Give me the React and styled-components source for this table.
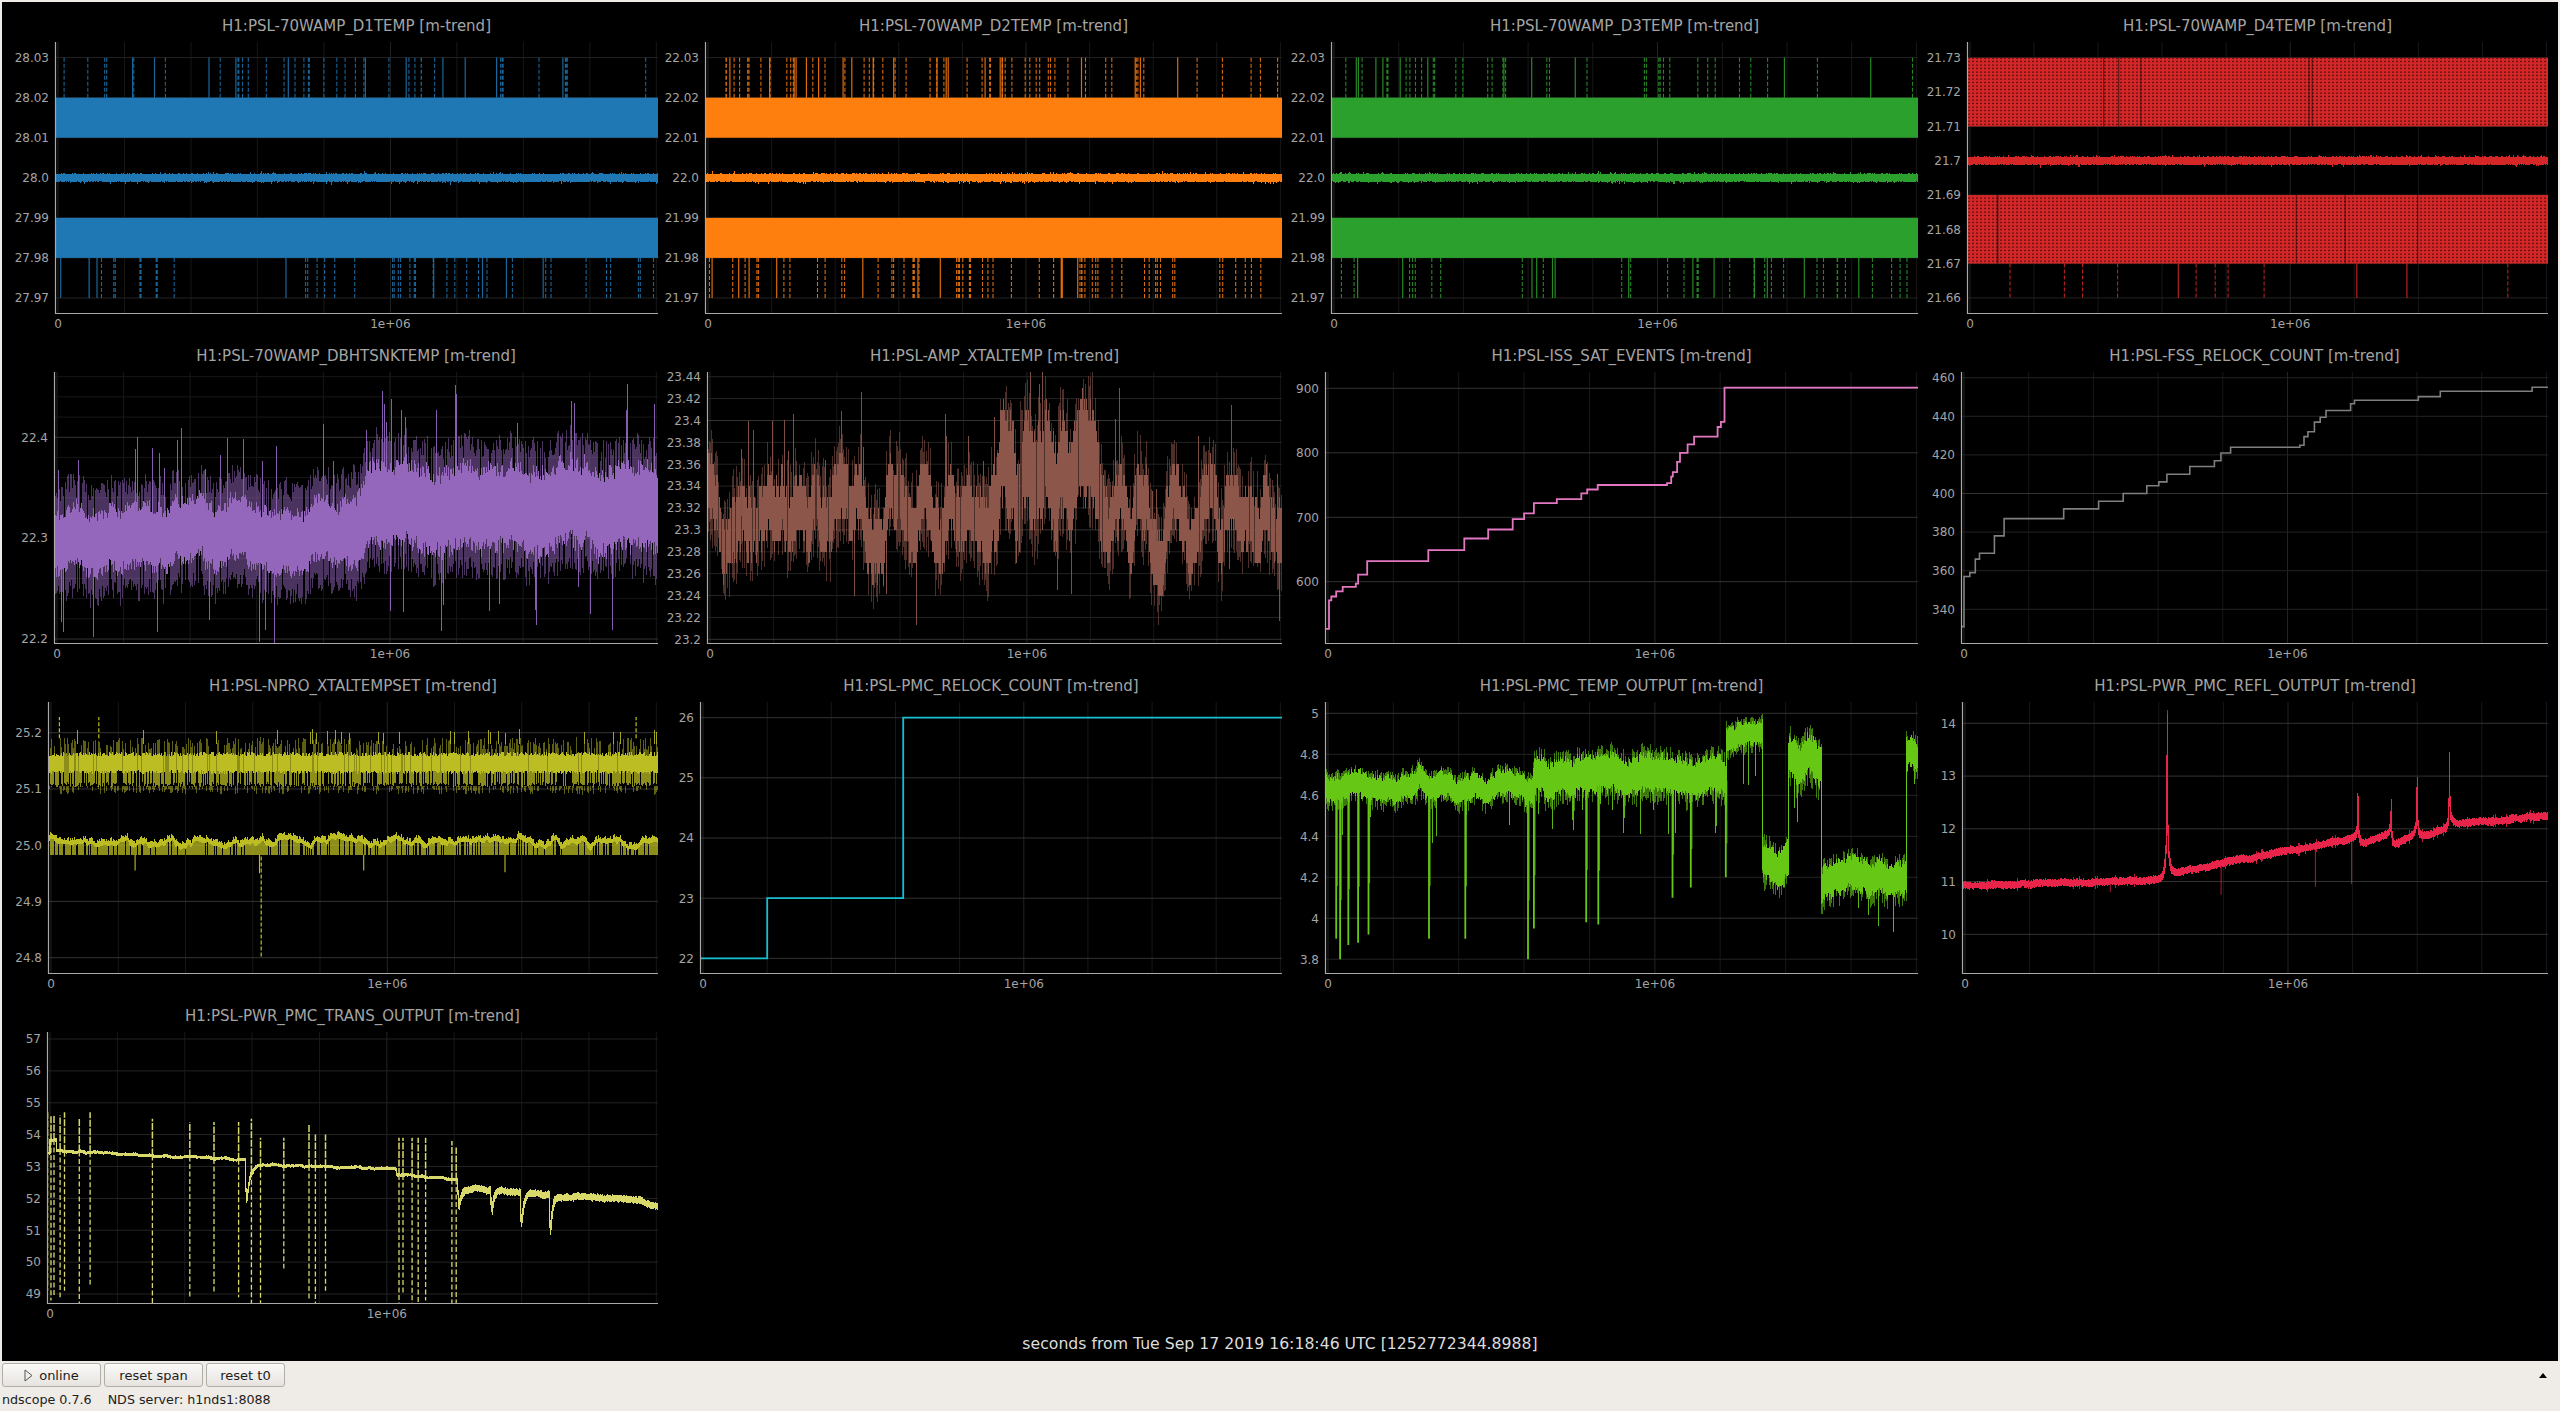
import React from 'react';
import styled, { createGlobalStyle } from 'styled-components';

const GlobalStyle = createGlobalStyle`
  html, body {
    margin: 0;
    padding: 0;
  }
  body {
    background: #efece7;
    font-family: "DejaVu Sans", "Liberation Sans", sans-serif;
    overflow: hidden;
  }
`;

const Window = styled.div`
  width: 2560px;
  height: 1411px;
  box-sizing: border-box;
  padding: 2px 2px 0 2px;
  display: flex;
  flex-direction: column;
  background: #efece7;
`;

const Scope = styled.div`
  flex: none;
  height: 1359px;
  background: #000;
  display: flex;
  flex-direction: column;
`;

const PlotGrid = styled.div`
  display: grid;
  grid-template-columns: 648px 619px 631px 625px;
  grid-template-rows: repeat(4, 330px);
  column-gap: 5px;
  padding-left: 8px;
`;

const Cell = styled.div`
  display: flex;
  flex-direction: column;
  min-width: 0;
`;

const PlotTitle = styled.div`
  height: 40px;
  box-sizing: border-box;
  padding: 14px 0 0 ${(p) => p.$inset}px;
  line-height: 20px;
  font-size: 15px;
  color: #a4a4a4;
  text-align: center;
  white-space: nowrap;
`;

const Chart = styled.svg`
  display: block;
  overflow: visible;
  font-family: "DejaVu Sans", sans-serif;
  font-size: 12px;
`;

const TimeLabel = styled.div`
  height: 39px;
  box-sizing: border-box;
  padding-top: 13px;
  line-height: 18px;
  font-size: 15.7px;
  color: #dcdcdc;
  text-align: center;
  white-space: nowrap;
`;

const Controls = styled.div`
  flex: 1;
  display: flex;
  flex-direction: column;
`;

const Toolbar = styled.div`
  display: flex;
  align-items: center;
  gap: 3px;
  height: 24px;
  margin-top: 2px;
`;

const Button = styled.button`
  width: ${(p) => p.$w}px;
  height: 24px;
  padding: 0;
  display: inline-flex;
  align-items: center;
  justify-content: center;
  gap: 6px;
  font-family: "DejaVu Sans", sans-serif;
  font-size: 13px;
  color: #1c1c1c;
  background: linear-gradient(#fbfaf9, #e6e3df);
  border: 1px solid #b1ada7;
  border-radius: 3px;
`;

const Spacer = styled.div`
  flex: 1;
`;

const CollapseArrow = styled.div`
  width: 0;
  height: 0;
  margin-right: 11px;
  border-left: 4px solid transparent;
  border-right: 4px solid transparent;
  border-bottom: 5px solid #000;
`;

const StatusBar = styled.div`
  display: flex;
  align-items: center;
  gap: 16px;
  height: 24px;
  font-size: 12.7px;
  color: #202020;
  white-space: nowrap;
`;

// ---- plotting helpers ----

const H = 272;
const SVG_H = 290;
const XSPAN = 1.805;
const COL_W = [648, 619, 631, 625];
const GRID = ['#333333', '#232323', '#171717'];

function mulberry32(seed) {
  let a = seed;
  return function () {
    a |= 0;
    a = (a + 0x6d2b79f5) | 0;
    let t = Math.imul(a ^ (a >>> 15), 1 | a);
    t = (t + Math.imul(t ^ (t >>> 7), 61 | t)) ^ t;
    return ((t ^ (t >>> 14)) >>> 0) / 4294967296;
  };
}

function makeNoise(seed, knots) {
  const r = mulberry32(seed);
  const vals = Array.from({ length: knots + 2 }, () => r() * 2 - 1);
  return (u) => {
    const t = ((u + 0.05) / 1.9) * knots;
    const i = Math.max(0, Math.min(knots, Math.floor(t)));
    const f = Math.max(0, Math.min(1, t - i));
    const s = (1 - Math.cos(f * Math.PI)) / 2;
    return vals[i] * (1 - s) + vals[i + 1] * s;
  };
}

const f1 = (v) => v.toFixed(1);

const vseg = (x, a, b) => {
  let lo = Math.min(a, b);
  let hi = Math.max(a, b);
  if (hi - lo < 1) {
    const m = (lo + hi) / 2;
    lo = m - 0.5;
    hi = m + 0.5;
  }
  return `M${f1(x)} ${f1(lo)}V${f1(hi)}`;
};

const columns = (ctx) => {
  const out = [];
  for (let px = ctx.ax + 1; px < ctx.w; px++) out.push([px + 0.5, ctx.ux(px + 0.5)]);
  return out;
};

const stepPath = (ctx, steps, uEnd = 1.9) => {
  const { sx, sy } = ctx;
  let d = `M${f1(sx(steps[0][0]))} ${f1(sy(steps[0][1]))}`;
  for (let i = 1; i < steps.length; i++) {
    d += `H${f1(sx(steps[i][0]))}V${f1(sy(steps[i][1]))}`;
  }
  return d + `H${f1(sx(uEnd))}`;
};

// min / max of a value function over the width of one pixel column
const spanOf = (fn, u, du = 0.0008) => {
  let lo = Infinity;
  let hi = -Infinity;
  for (let k = -2; k <= 2; k++) {
    const v = fn(u + k * du);
    lo = Math.min(lo, v);
    hi = Math.max(hi, v);
  }
  return [lo, hi];
};

// spec returns a list of [layer, lo, hi] for each column
const envelope = (layers, spec) => (ctx) => {
  const paths = layers.map(() => '');
  for (const [px, u] of columns(ctx)) {
    for (const [i, lo, hi] of spec(u, ctx.rng)) {
      paths[i] += vseg(px, ctx.sy(lo), ctx.sy(hi));
    }
  }
  return paths.map((d, i) => (
    <path key={`env${i}`} d={d} stroke={ctx.color} strokeWidth={1} opacity={layers[i]} fill="none" shapeRendering="crispEdges" />
  ));
};

const spikeLines = (ctx, list, key, { width = 1.3, dash, opacity = 1 } = {}) => {
  let d = '';
  for (const [u, a, b] of list) d += `M${f1(ctx.sx(u))} ${f1(ctx.sy(a))}V${f1(ctx.sy(b))}`;
  return <path key={key} d={d} stroke={ctx.color} strokeWidth={width} strokeDasharray={dash} opacity={opacity} fill="none" />;
};

const bandDraw = ({ c, top, bot, up, down, pattern, streaks }) => (ctx) => {
  const { sy, ax, w, rng, color } = ctx;
  const x1 = ax + 1;
  const fill = pattern ? `url(#pat-${ctx.id})` : color;
  const els = [];
  const rect = (k, [lo, hi]) => (
    <rect key={k} x={x1} y={sy(hi)} width={w - x1} height={sy(lo) - sy(hi)} fill={fill} />
  );
  els.push(rect('bt', top), rect('bb', bot));
  const dashes = (k, [from, to, n]) => {
    let solid = '';
    let dashed = '';
    for (let i = 0; i < n; i++) {
      const x = f1(x1 + 3 + rng() * (w - x1 - 6));
      const seg = `M${x} ${f1(sy(from))}V${f1(sy(to))}`;
      if (rng() < 0.22) solid += seg;
      else dashed += seg;
    }
    return [
      <path key={`${k}s`} d={solid} stroke={color} strokeWidth={1.2} opacity={0.85} fill="none" />,
      <path key={`${k}d`} d={dashed} stroke={color} strokeWidth={1.1} strokeDasharray="4 2" opacity={0.85} fill="none" />,
    ];
  };
  if (up) els.push(...dashes('up', up));
  if (down) els.push(...dashes('dn', down));
  if (streaks) {
    let d = '';
    for (let i = 0; i < streaks; i++) {
      const x = f1(x1 + rng() * (w - x1));
      const band = rng() < 0.5 ? top : bot;
      d += `M${x} ${f1(sy(band[1]))}V${f1(sy(band[0]))}`;
    }
    els.push(<path key="streaks" d={d} stroke="#000" strokeWidth={1.2} opacity={0.5} fill="none" />);
  }
  let mean = '';
  const my = sy(c);
  for (let px = x1; px < w; px++) {
    const a = 3.4 + rng() * 1.3 + (rng() < 0.06 ? rng() * 2.4 : 0);
    const b = 3.4 + rng() * 1.3 + (rng() < 0.06 ? rng() * 2.4 : 0);
    mean += `M${px + 0.5} ${f1(my - a)}V${f1(my + b)}`;
  }
  els.push(<path key="mean" d={mean} stroke={color} strokeWidth={1} fill="none" shapeRendering="crispEdges" />);
  return els;
};

// ---- per-channel data ----

const pn1 = makeNoise(51, 36);
const pn2 = makeNoise(52, 180);
const purpleSpec = (u, r) => {
  const ramp = Math.max(0, Math.min(1, (u - 0.84) / 0.12));
  const m = 22.303 + 0.027 * ramp + 0.009 * pn1(u) + 0.005 * pn2(u);
  const ch = 0.03 + 0.01 * ramp;
  const out = [[2, m - ch * (0.75 + 0.4 * r()), m + ch * (0.75 + 0.4 * r())]];
  if (r() < 0.8) out.push([1, m - ch - 0.012 - 0.02 * r(), m + ch + 0.012 + 0.02 * r()]);
  if (r() < 0.09) {
    const top = r() < 0.55;
    const ext = ch + 0.035 + 0.045 * r();
    out.push(top ? [0, m, m + ext] : [0, m - ext, m]);
  }
  return out;
};

const bn1 = makeNoise(61, 80);
const bn2 = makeNoise(62, 260);
const brownHigh = (u) => {
  const a = Math.max(0, Math.min(1, (u - 0.85) / 0.08));
  const b = Math.max(0, Math.min(1, (1.26 - u) / 0.05));
  return Math.min(a, b);
};
const brownCenter = (u) => {
  let base = 23.31 + 0.04 * brownHigh(u);
  base -= 0.028 * Math.exp(-(((u - 1.42) / 0.03) ** 2));
  return base + 0.03 * bn1(u) + 0.01 * bn2(u);
};
const brownSpec = (u, r) => {
  const c = brownCenter(u);
  const h = 0.026 + 0.018 * brownHigh(u);
  const q = (v) => Math.round(v / 0.01) * 0.01;
  const out = [];
  if (r() < 0.92) out.push([2, q(c - h * (0.7 + 0.45 * r())), q(c + h * (0.7 + 0.45 * r()))]);
  else out.push([1, c - h, c + h]);
  if (r() < 0.55) out.push([1, c - h - 0.008 - 0.02 * r(), c + h + 0.008 + 0.022 * r()]);
  if (r() < 0.07) {
    const ext = h + 0.03 + 0.05 * r();
    out.push(r() < 0.6 ? [0, c, c + ext] : [0, c - ext, c]);
  }
  return out;
};

const on1 = makeNoise(91, 70);
const on2 = makeNoise(92, 240);
const oliveSpec = (u, r) => {
  const out = [];
  const cTop = 25.162 + 0.008 * (r() - 0.5);
  const cBot = 25.13 + 0.006 * (r() - 0.5);
  if (r() < 0.88) out.push([3, cBot, cTop]);
  else out.push([2, cBot, cTop]);
  if (r() < 0.65) out.push([2, 25.104 + 0.008 * r(), cBot]);
  if (r() < 0.5) out.push([1, cTop, 25.17 + 0.022 * r()]);
  if (r() < 0.45) out.push([1, 25.09 + 0.014 * r(), 25.106]);
  if (r() < 0.04) out.push([0, 25.18, 25.2 + 0.006 * r()]);
  const m = 25.004 + 0.008 * on1(u) + 0.004 * on2(u);
  out.push([3, m - 0.003, m + 0.004 + 0.007 * r()]);
  if (r() < 0.75) out.push([2, 24.983, m]);
  return out;
};

const gn1 = makeNoise(111, 60);
const gn2 = makeNoise(112, 220);
const GREEN_REGIONS = [
  [-0.1, 0.63, 4.64, 0.075],
  [0.63, 1.22, 4.7, 0.11],
  [1.22, 1.33, 4.89, 0.07],
  [1.33, 1.41, 4.26, 0.11],
  [1.41, 1.51, 4.77, 0.12],
  [1.51, 1.77, 4.19, 0.1],
  [1.77, 2.0, 4.8, 0.09],
];
const greenRegion = (u) => GREEN_REGIONS.find((g) => u < g[1]) || GREEN_REGIONS[6];
const greenCenter = (u) => {
  const g = greenRegion(u);
  return g[2] + 0.03 * gn1(u) + 0.015 * gn2(u) + 0.06 * Math.exp(-(((u - 0.285) / 0.012) ** 2));
};
const greenSpec = (u, r) => {
  const h = greenRegion(u)[3];
  const [lo, hi] = spanOf(greenCenter, u, 0.0007);
  const out = [[2, lo - h * (0.55 + 0.35 * r()), hi + h * (0.55 + 0.35 * r())]];
  if (r() < 0.6) out.push([1, lo - h * (0.9 + 0.5 * r()), hi + h * (0.9 + 0.3 * r())]);
  if (r() < 0.06) out.push([0, lo - h - 0.05 - 0.15 * r(), lo]);
  return out;
};
const GREEN_SPIKES = [
  [0.025, 3.9], [0.037, 3.8], [0.062, 3.87], [0.092, 3.88], [0.124, 3.92], [0.309, 3.9],
  [0.42, 3.9], [0.612, 3.8], [0.63, 3.95], [0.79, 3.98], [0.827, 3.97], [1.054, 4.1],
  [1.11, 4.15], [1.217, 4.2], [1.395, 4.15], [1.76, 4.1],
];

const rn1 = makeNoise(121, 90);
const RED_SPIKES = [
  [0.626, 2.4, 0.9],
  [1.217, 0.7, 0.2],
  [1.32, 0.55, 0.2],
  [1.4, 0.95, 0.25],
  [1.5, 1.05, 0.3],
];
const reflValue = (u) => {
  let v;
  if (u < 0.626) v = 10.93 + (0.1 * Math.max(0, u)) / 0.626;
  else if (u < 1.217) v = 11.15 + ((u - 0.626) / 0.591) * 0.68;
  else if (u < 1.32) v = 11.7 + ((u - 1.217) / 0.103) * 0.2;
  else if (u < 1.4) v = 11.65 + ((u - 1.32) / 0.08) * 0.25;
  else if (u < 1.5) v = 11.85 + ((u - 1.4) / 0.1) * 0.15;
  else v = 12.08 + ((u - 1.5) / 0.3) * 0.17;
  for (const [u0, a, b] of RED_SPIKES) {
    v += a * Math.exp(-Math.abs(u - u0) / 0.0011);
    v += b * Math.exp(-Math.abs(u - u0) / 0.006);
  }
  return v + 0.02 * rn1(u);
};
const reflSpec = (u, r) => {
  const [lo, hi] = spanOf(reflValue, u);
  const out = [[1, lo - 0.05 - 0.035 * r(), hi + 0.05 + 0.035 * r()]];
  if (r() < 0.05) out.push([0, lo - 0.12, hi + 0.12]);
  return out;
};

const tn1 = makeNoise(131, 120);
const TRANS_DIPS = [
  [0.585, 1.3, 0.01],
  [1.214, 0.6, 0.01],
  [1.313, 0.7, 0.006],
  [1.4, 1.0, 0.007],
  [1.486, 1.2, 0.007],
];
const transValue = (u) => {
  let v;
  if (u < 0) v = 53.45;
  else if (u < 0.02) v = 53.85;
  else if (u < 0.6) v = 53.5 - ((u - 0.02) / 0.58) * 0.3;
  else if (u < 1.03) v = 53.07 - ((u - 0.6) / 0.43) * 0.15;
  else if (u < 1.212) v = 52.75 - ((u - 1.03) / 0.182) * 0.15;
  else if (u < 1.5) v = 52.35 - ((u - 1.212) / 0.288) * 0.25;
  else if (u < 1.74) v = 52.07 - ((u - 1.5) / 0.24) * 0.1;
  else v = 51.97 - ((u - 1.74) / 0.07) * 0.25;
  for (const [u0, d, w] of TRANS_DIPS) {
    if (u > u0 - 0.004) v -= d * Math.exp(-Math.abs(u - u0) / w);
  }
  return v + 0.03 * tn1(u);
};
const transSpec = (u, r) => {
  const [lo, hi] = spanOf(transValue, u);
  const h = u > 1.212 ? 0.1 : 0.045;
  return [[1, lo - h * (0.8 + 0.5 * r()), hi + h * (0.8 + 0.5 * r())]];
};
const TRANS_SPIKES = [
  [-0.007, 54.7, 49.1], [0.003, 54.6, 48.8], [0.012, 54.6, 48.9], [0.03, 54.6, 48.9],
  [0.043, 54.7, 49.1], [0.087, 54.5, 48.7], [0.119, 54.7, 49.3], [0.304, 54.5, 48.7],
  [0.415, 54.4, 48.9], [0.487, 54.4, 49.0], [0.56, 54.4, 48.9], [0.598, 54.5, 48.7],
  [0.625, 53.9, 48.7], [0.694, 53.9, 49.8], [0.769, 54.3, 48.8], [0.788, 54.0, 48.7],
  [0.818, 54.0, 49.1], [1.036, 53.9, 48.7], [1.048, 53.9, 49.0], [1.075, 53.9, 48.7],
  [1.093, 53.9, 48.7], [1.115, 53.9, 48.8], [1.193, 53.8, 48.7], [1.206, 53.6, 48.7],
];

const ISS_STEPS = [
  [-0.02, 527], [0.003, 571], [0.01, 577], [0.025, 585], [0.045, 592], [0.085, 597],
  [0.092, 611], [0.12, 632], [0.307, 649], [0.417, 667], [0.49, 681], [0.565, 697],
  [0.6, 706], [0.63, 722], [0.7, 728], [0.775, 737], [0.793, 743], [0.825, 750],
  [1.037, 753], [1.05, 763], [1.055, 770], [1.068, 786], [1.077, 800], [1.1, 813],
  [1.12, 825], [1.192, 840], [1.202, 848], [1.213, 901],
];

const FSS_STEPS = [
  [-0.02, 331], [0.0, 357], [0.018, 359], [0.035, 366], [0.048, 369], [0.094, 378],
  [0.124, 387], [0.308, 392], [0.416, 396], [0.492, 400], [0.565, 404], [0.602, 406],
  [0.627, 410], [0.698, 414], [0.774, 417], [0.794, 421], [0.824, 424], [1.038, 425],
  [1.051, 429.5], [1.063, 432], [1.083, 437], [1.101, 439.5], [1.119, 443], [1.195, 446.5],
  [1.207, 448.3], [1.404, 450.2], [1.472, 453], [1.756, 455],
];

const PMC_STEPS = [[-0.02, 22], [0.2, 23], [0.624, 26]];

const fmt2 = (v) => v.toFixed(2).replace(/0$/, '');
const fmt1 = (v) => v.toFixed(1);
const fmt1s = (v) => v.toFixed(1).replace(/\.0$/, '');
const fmtInt = (v) => String(Math.round(v));

const seq = (a, b, step) => {
  const out = [];
  const n = Math.round((b - a) / step);
  for (let i = 0; i <= n; i++) out.push(+(a + i * step).toFixed(6));
  return out;
};

const mk = (values, fmt, lvl, majors = []) =>
  values.map((v) => ({ v, label: fmt(v), lvl: majors.some((m) => Math.abs(m - v) < 1e-6) ? 0 : lvl }));

const stepDraw = (steps, width) => (ctx) => [
  <path key="step" d={stepPath(ctx, steps)} stroke={ctx.color} strokeWidth={width} fill="none" />,
];

const PLOTS = [
  {
    id: 1, col: 0, ax: 45, seed: 11, color: '#1f77b4',
    title: 'H1:PSL-70WAMP_D1TEMP [m-trend]',
    yr: [27.966, 28.0339],
    ticks: mk(seq(27.97, 28.03, 0.01), fmt2, 1),
    draw: bandDraw({ c: 28.0, top: [28.01, 28.02], bot: [27.98, 27.99], up: [28.02, 28.03, 48], down: [27.98, 27.97, 46] }),
  },
  {
    id: 2, col: 1, ax: 42, seed: 12, color: '#ff7f0e',
    title: 'H1:PSL-70WAMP_D2TEMP [m-trend]',
    yr: [21.966, 22.0339],
    ticks: mk(seq(21.97, 22.03, 0.01), fmt2, 1),
    draw: bandDraw({ c: 22.0, top: [22.01, 22.02], bot: [21.98, 21.99], up: [22.02, 22.03, 70], down: [21.98, 21.97, 64] }),
  },
  {
    id: 3, col: 2, ax: 44, seed: 13, color: '#2ca02c',
    title: 'H1:PSL-70WAMP_D3TEMP [m-trend]',
    yr: [21.966, 22.0339],
    ticks: mk(seq(21.97, 22.03, 0.01), fmt2, 1),
    draw: bandDraw({ c: 22.0, top: [22.01, 22.02], bot: [21.98, 21.99], up: [22.02, 22.03, 44], down: [21.98, 21.97, 42] }),
  },
  {
    id: 4, col: 3, ax: 44, seed: 14, color: '#d62728',
    title: 'H1:PSL-70WAMP_D4TEMP [m-trend]',
    yr: [21.6553, 21.7346],
    ticks: mk(seq(21.66, 21.73, 0.01), fmt2, 1),
    pattern: true,
    draw: bandDraw({ c: 21.7, top: [21.71, 21.73], bot: [21.67, 21.69], down: [21.67, 21.66, 12], pattern: true, streaks: 10 }),
  },
  {
    id: 5, col: 0, ax: 44, seed: 15, color: '#9467bd',
    title: 'H1:PSL-70WAMP_DBHTSNKTEMP [m-trend]',
    yr: [22.195, 22.4647],
    ticks: mk([22.2, 22.3, 22.4], fmt1, 0),
    minor: seq(22.2, 22.46, 0.02),
    draw: envelope([0.9, 0.5, 1], purpleSpec),
  },
  {
    id: 6, col: 1, ax: 44, seed: 16, color: '#8c564b',
    title: 'H1:PSL-AMP_XTALTEMP [m-trend]',
    yr: [23.1957, 23.4443],
    ticks: mk(seq(23.2, 23.44, 0.02), fmt2, 1, [23.2, 23.3, 23.4]),
    draw: envelope([0.9, 0.55, 1], brownSpec),
  },
  {
    id: 7, col: 2, ax: 38, seed: 17, color: '#e377c2',
    title: 'H1:PSL-ISS_SAT_EVENTS [m-trend]',
    yr: [503.4, 925.3],
    ticks: mk([600, 700, 800, 900], fmtInt, 0),
    draw: stepDraw(ISS_STEPS, 1.8),
  },
  {
    id: 8, col: 3, ax: 38, seed: 18, color: '#7f7f7f',
    title: 'H1:PSL-FSS_RELOCK_COUNT [m-trend]',
    yr: [322, 462.95],
    ticks: mk(seq(340, 460, 20), fmtInt, 1, [400]),
    draw: stepDraw(FSS_STEPS, 1.6),
  },
  {
    id: 9, col: 0, ax: 38, seed: 19, color: '#bcbd22',
    title: 'H1:PSL-NPRO_XTALTEMPSET [m-trend]',
    yr: [24.771, 25.2546],
    ticks: mk([24.8, 24.9, 25.0, 25.1, 25.2], fmt1, 0),
    draw: (ctx) => [
      ...envelope([0.85, 0.5, 0.75, 1], oliveSpec)(ctx),
      spikeLines(ctx, [[0.025, 25.19, 25.228], [0.142, 25.19, 25.228], [1.74, 25.19, 25.228]], 'su', { width: 1.2, dash: '4 2' }),
      spikeLines(ctx, [[0.625, 24.98, 24.8]], 'sd', { width: 1.2, dash: '4 2' }),
      spikeLines(ctx, [[0.25, 24.983, 24.955], [0.62, 24.983, 24.95], [0.93, 24.983, 24.955], [1.35, 24.983, 24.952]], 'sd2', { width: 1.1 }),
    ],
  },
  {
    id: 10, col: 1, ax: 37, seed: 20, color: '#17becf',
    title: 'H1:PSL-PMC_RELOCK_COUNT [m-trend]',
    yr: [21.739, 26.261],
    ticks: mk([22, 23, 24, 25, 26], fmtInt, 0),
    draw: stepDraw(PMC_STEPS, 1.8),
  },
  {
    id: 11, col: 2, ax: 38, seed: 21, color: '#66c814',
    title: 'H1:PSL-PMC_TEMP_OUTPUT [m-trend]',
    yr: [3.728, 5.055],
    ticks: mk(seq(3.8, 5.0, 0.2), fmt1s, 1, [4, 5]),
    draw: (ctx) => [
      ...envelope([0.9, 0.6, 1], greenSpec)(ctx),
      spikeLines(ctx, GREEN_SPIKES.map(([u, v]) => [u, greenCenter(u), v]), 'gs', { width: 1.8 }),
      spikeLines(ctx, GREEN_SPIKES.map(([u, v]) => [u + 0.003, greenCenter(u), v + (greenCenter(u) - v) * 0.35]), 'gs2', { width: 1.2, opacity: 0.8 }),
    ],
  },
  {
    id: 12, col: 3, ax: 39, seed: 22, color: '#e8244a',
    title: 'H1:PSL-PWR_PMC_REFL_OUTPUT [m-trend]',
    yr: [9.247, 14.404],
    ticks: mk([10, 11, 12, 13, 14], fmtInt, 0),
    draw: (ctx) => [
      ...envelope([0.8, 1], reflSpec)(ctx),
      spikeLines(ctx, [[0.793, 11.3, 10.75], [1.085, 11.6, 10.9], [1.197, 11.8, 10.95], [0.45, 11.0, 10.8]], 'rs', { width: 1, opacity: 0.75 }),
    ],
  },
  {
    id: 13, col: 0, ax: 37, seed: 23, color: '#d9d96b',
    title: 'H1:PSL-PWR_PMC_TRANS_OUTPUT [m-trend]',
    yr: [48.686, 57.22],
    ticks: mk(seq(49, 57, 1), fmtInt, 1),
    draw: (ctx) => [
      ...envelope([0.8, 1], transSpec)(ctx),
      spikeLines(ctx, TRANS_SPIKES.map(([u, top]) => [u, transValue(u), top]), 'tu', { width: 1.5, dash: '7 1.5' }),
      spikeLines(ctx, TRANS_SPIKES.map(([u, , bot]) => [u, transValue(u), bot]), 'td', { width: 1.3, dash: '5 2.5' }),
    ],
  },
];

const PlotCell = ({ p }) => {
  const w = COL_W[p.col];
  const x0 = p.ax + 3;
  const ppm = (w - x0) / XSPAN;
  const sx = (u) => x0 + u * ppm;
  const ux = (px) => (px - x0) / ppm;
  const sy = (v) => ((p.yr[1] - v) / (p.yr[1] - p.yr[0])) * H;
  const ctx = { id: p.id, sx, ux, sy, ax: p.ax, w, rng: mulberry32(p.seed), color: p.color };
  const clipId = `clip-${p.id}`;

  const vGrid = seq(0, 1.8, 0.2).map((u) => (
    <line key={`vg${u}`} x1={f1(sx(u))} x2={f1(sx(u))} y1={0} y2={H} stroke={u === 0 || u === 1 ? GRID[1] : GRID[2]} />
  ));
  const minor = (p.minor || [])
    .filter((v) => !p.ticks.some((t) => Math.abs(t.v - v) < 1e-6))
    .map((v) => <line key={`mg${v}`} x1={p.ax} x2={w} y1={f1(sy(v))} y2={f1(sy(v))} stroke={GRID[2]} />);
  const hGrid = p.ticks.map((t) => (
    <line key={`hg${t.v}`} x1={p.ax} x2={w} y1={f1(sy(t.v))} y2={f1(sy(t.v))} stroke={GRID[t.lvl]} />
  ));

  return (
    <Cell>
      <PlotTitle $inset={p.ax}>{p.title}</PlotTitle>
      <Chart width={w} height={SVG_H}>
        <defs>
          <clipPath id={clipId}>
            <rect x={p.ax + 1} y={0} width={w - p.ax - 1} height={H} />
          </clipPath>
          {p.pattern && (
            <pattern id={`pat-${p.id}`} width="4" height="3.5" patternUnits="userSpaceOnUse">
              <rect width="4" height="3.5" fill={p.color} />
              <rect x="1" y="1.5" width="2" height="1.2" fill="#520d0e" />
            </pattern>
          )}
        </defs>
        {vGrid}
        {minor}
        {hGrid}
        <g clipPath={`url(#${clipId})`}>{p.draw(ctx)}</g>
        <line x1={p.ax + 0.5} x2={p.ax + 0.5} y1={0} y2={H} stroke="#a9a9a9" strokeWidth={1.2} />
        <line x1={p.ax} x2={w} y1={H - 0.5} y2={H - 0.5} stroke="#a9a9a9" strokeWidth={1.2} />
        {p.ticks.map((t) => (
          <text key={`yl${t.v}`} x={p.ax - 6} y={f1(sy(t.v) + 4.3)} textAnchor="end" fill="#a4a4a4">
            {t.label}
          </text>
        ))}
        <text x={f1(sx(0))} y={285.5} textAnchor="middle" fill="#a4a4a4">0</text>
        <text x={f1(sx(1))} y={285.5} textAnchor="middle" fill="#a4a4a4">1e+06</text>
      </Chart>
    </Cell>
  );
};

const PlayIcon = () => (
  <svg width="9" height="13" viewBox="0 0 9 13">
    <polygon points="1,1 8,6.5 1,12" fill="none" stroke="#555" strokeWidth="1" />
  </svg>
);

export default function App() {
  return (
    <>
      <GlobalStyle />
      <Window>
        <Scope>
          <PlotGrid>
            {PLOTS.map((p) => (
              <PlotCell key={p.id} p={p} />
            ))}
          </PlotGrid>
          <TimeLabel>seconds from Tue Sep 17 2019 16:18:46 UTC [1252772344.8988]</TimeLabel>
        </Scope>
        <Controls>
          <Toolbar>
            <Button $w={99}>
              <PlayIcon />
              online
            </Button>
            <Button $w={99}>reset span</Button>
            <Button $w={79}>reset t0</Button>
            <Spacer />
            <CollapseArrow />
          </Toolbar>
          <StatusBar>
            <span>ndscope 0.7.6</span>
            <span>NDS server: h1nds1:8088</span>
          </StatusBar>
        </Controls>
      </Window>
    </>
  );
}
